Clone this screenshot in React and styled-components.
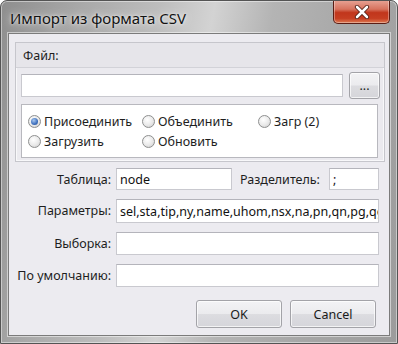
import styled, { createGlobalStyle } from "styled-components";

const GlobalStyle = createGlobalStyle`
  html, body {
    margin: 0;
    padding: 0;
    background: #ffffff;
  }
  body {
    font-family: "Noto Sans", "DejaVu Sans", sans-serif;
    font-size: 12px;
    color: #1e1e1e;
  }
`;

/** Window frame */

const Window = styled.div`
  width: 398px;
  height: 344px;
  box-sizing: border-box;
  display: flex;
  flex-direction: column;
  border: 1px solid #545454;
  border-radius: 7px 7px 0 0;
  background: linear-gradient(
    100deg,
    #8e8e8e 0%,
    #a9a9a9 18%,
    #bdbdbd 35%,
    #d3d3d3 47%,
    #b4b4b4 60%,
    #a6a6a6 80%,
    #9c9c9c 100%
  );
  box-shadow: inset 0 0 0 1px rgba(255, 255, 255, 0.45);
  overflow: hidden;
`;

const TitleBar = styled.div`
  height: 32px;
  flex: none;
  display: flex;
  align-items: flex-start;
  justify-content: space-between;
  padding-left: 9px;
`;

const Title = styled.div`
  font-size: 15px;
  line-height: 15px;
  margin-top: 10px;
  color: #121212;
  text-shadow: 0 0 8px rgba(255, 255, 255, 0.9), 0 0 3px rgba(255, 255, 255, 0.8);
`;

const CloseButton = styled.div`
  width: 57px;
  height: 24px;
  margin-right: 7px;
  margin-top: -1px;
  box-sizing: border-box;
  border: 1px solid #5a1d14;
  border-top: none;
  border-radius: 0 0 5px 5px;
  background: linear-gradient(
    180deg,
    #e8a597 0%,
    #d7735e 40%,
    #c1361c 55%,
    #c63e22 80%,
    #dd7a52 100%
  );
  box-shadow: inset 0 0 0 1px rgba(255, 255, 255, 0.35);
  display: flex;
  align-items: center;
  justify-content: center;
`;

const Client = styled.div`
  flex: 1;
  margin: 0 7px 7px 7px;
  border: 1px solid #7b7b7b;
  background: #ecebf0;
  box-shadow: 0 0 0 1px rgba(255, 255, 255, 0.5);
  padding: 8px 4px 0 6px;
  display: flex;
  flex-direction: column;
`;

/** File group */

const Group = styled.div`
  border: 1px solid #c6c6cc;
  box-shadow: inset 0 0 0 1px #f8f8fa;
  background: #ebeaef;
  padding: 0 4px 3px 4px;
  display: flex;
  flex-direction: column;
`;

const GroupHeader = styled.div`
  height: 24px;
  display: flex;
  align-items: center;
  margin: 0 -4px;
  padding-left: 7px;
  border-bottom: 1px solid #d2d2d8;
  background: #e6e5ea;
  font-size: 12.5px;
`;

const FileRow = styled.div`
  display: flex;
  align-items: center;
  gap: 6px;
  margin-top: 4px;
  padding-left: 1px;
`;

const TextBox = styled.div`
  box-sizing: border-box;
  height: ${(p) => p.$h || 22}px;
  width: ${(p) => (p.$w ? p.$w + "px" : "auto")};
  flex: ${(p) => (p.$w ? "none" : 1)};
  min-width: 0;
  background: #ffffff;
  border: 1px solid #c9c9cf;
  border-top-color: #b4b4bb;
  padding: 0 3px;
  display: flex;
  align-items: center;
  white-space: nowrap;
  overflow: hidden;
  font-size: 12.5px;
  color: #111;
`;

const Button = styled.div`
  box-sizing: border-box;
  width: ${(p) => p.$w}px;
  height: ${(p) => p.$h}px;
  border: 1px solid #a3a3a8;
  border-radius: 3px;
  background: linear-gradient(180deg, #f3f3f5 0%, #ebebee 48%, #dcdce0 52%, #d5d5da 100%);
  box-shadow: inset 0 0 0 1px rgba(255, 255, 255, 0.7);
  display: flex;
  align-items: center;
  justify-content: center;
  font-size: 12.5px;
  color: #1a1a1a;
`;

const RadioBox = styled.div`
  margin-top: 5px;
  margin-left: 1px;
  margin-right: 2px;
  background: #ffffff;
  border: 1px solid #b8b8be;
  padding: 8px 0 8px 6px;
  display: grid;
  grid-template-columns: 114px 116px 1fr;
  row-gap: 4px;
`;

const RadioItem = styled.div`
  display: flex;
  align-items: center;
  gap: 3px;
  height: 16px;
  font-size: 12.5px;
`;

const RadioCircle = styled.span`
  width: 13px;
  height: 13px;
  box-sizing: border-box;
  border-radius: 50%;
  border: 1px solid #8e8f8f;
  background: radial-gradient(circle at 40% 35%, #ffffff 0%, #e9e9e9 55%, #c9c9c9 100%);
  display: flex;
  align-items: center;
  justify-content: center;
  flex: none;
  &::after {
    content: "";
    display: ${(p) => (p.$checked ? "block" : "none")};
    width: 7px;
    height: 7px;
    border-radius: 50%;
    background: radial-gradient(circle at 40% 35%, #a9c8f0 0%, #3d6fbd 60%, #2a4f93 100%);
  }
`;

/** Fields */

const Form = styled.div`
  margin-top: 6px;
  display: grid;
  grid-template-columns: 96px 1fr;
  column-gap: 5px;
  row-gap: 9px;
  padding-right: 6px;
`;

const Label = styled.div`
  height: 22px;
  display: flex;
  align-items: center;
  justify-content: flex-end;
  font-size: 12.5px;
  color: #1e1e1e;
  white-space: nowrap;
`;

const FieldRow = styled.div`
  display: flex;
  align-items: center;
  gap: 8px;
`;

const InlineLabel = styled(Label)`
  width: 81px;
  justify-content: flex-start;
`;

const Footer = styled.div`
  margin-top: 13px;
  display: flex;
  justify-content: flex-end;
  gap: 8px;
  padding-right: 9px;
`;

function CloseGlyph() {
  return (
    <svg width="16" height="14" viewBox="0 0 16 14">
      <path
        d="M3 2 L13 12 M13 2 L3 12"
        stroke="#4a1a10"
        strokeWidth="4.2"
        strokeLinecap="round"
      />
      <path
        d="M3 2 L13 12 M13 2 L3 12"
        stroke="#ffffff"
        strokeWidth="2.6"
        strokeLinecap="round"
      />
    </svg>
  );
}

function Radio({ checked, children }) {
  return (
    <RadioItem>
      <RadioCircle $checked={checked} />
      {children}
    </RadioItem>
  );
}

export default function App() {
  return (
    <>
      <GlobalStyle />
      <Window>
        <TitleBar>
          <Title>Импорт из формата CSV</Title>
          <CloseButton>
            <CloseGlyph />
          </CloseButton>
        </TitleBar>
        <Client>
          <Group>
            <GroupHeader>Файл:</GroupHeader>
            <FileRow>
              <TextBox $h={23} />
              <Button $w={31} $h={27}>...</Button>
            </FileRow>
            <RadioBox>
              <Radio checked>Присоединить</Radio>
              <Radio>Объединить</Radio>
              <Radio>Загр (2)</Radio>
              <Radio>Загрузить</Radio>
              <Radio>Обновить</Radio>
            </RadioBox>
          </Group>
          <Form>
            <Label>Таблица:</Label>
            <FieldRow>
              <TextBox $w={116}>node</TextBox>
              <InlineLabel>Разделитель:</InlineLabel>
              <TextBox>;</TextBox>
            </FieldRow>
            <Label>Параметры:</Label>
            <TextBox $h={24}>sel,sta,tip,ny,name,uhom,nsx,na,pn,qn,pg,qg</TextBox>
            <Label>Выборка:</Label>
            <TextBox $h={23} />
            <Label>По умолчанию:</Label>
            <TextBox $h={23} />
          </Form>
          <Footer>
            <Button $w={86} $h={28}>OK</Button>
            <Button $w={86} $h={28}>Cancel</Button>
          </Footer>
        </Client>
      </Window>
    </>
  );
}
